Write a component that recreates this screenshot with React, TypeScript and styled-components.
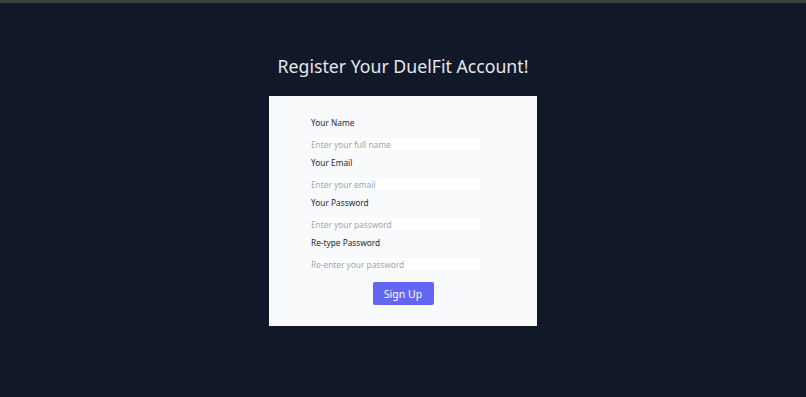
import { useState } from "react";
import styled, { createGlobalStyle } from "styled-components";

const GlobalStyle = createGlobalStyle`
  html, body {
    margin: 0;
    padding: 0;
    background: #111827;
    font-family: "Noto Sans", "Open Sans", sans-serif;
  }
`;

const fields = [
  { id: "name", label: "Your Name", type: "text", placeholder: "Enter your full name" },
  { id: "email", label: "Your Email", type: "email", placeholder: "Enter your email" },
  { id: "password", label: "Your Password", type: "password", placeholder: "Enter your password" },
  { id: "retype", label: "Re-type Password", type: "password", placeholder: "Re-enter your password" },
];

const App = () => {
  const [values, setValues] = useState<Record<string, string>>({});

  return (
    <>
      <GlobalStyle />
      <TopBar />
      <Page>
        <Title>Register Your DuelFit Account!</Title>
        <Card onSubmit={(e) => e.preventDefault()}>
          {fields.map((f) => (
            <Group key={f.id}>
              <Label htmlFor={f.id}>{f.label}</Label>
              <Input
                id={f.id}
                type={f.type}
                placeholder={f.placeholder}
                value={values[f.id] || ""}
                onChange={(e) => setValues({ ...values, [f.id]: e.target.value })}
              />
            </Group>
          ))}
          <ButtonRow>
            <SubmitButton type="submit">Sign Up</SubmitButton>
          </ButtonRow>
        </Card>
      </Page>
    </>
  );
};

export default App;

const TopBar = styled.div`
  height: 3px;
  background: #3b3d42;
`;

const Page = styled.div`
  display: flex;
  flex-direction: column;
  align-items: center;
  min-height: 394px;
  padding-top: 51px;
  box-sizing: border-box;
`;

const Title = styled.h1`
  margin: 0 0 18px;
  font-size: 17.7px;
  line-height: 24px;
  font-weight: 400;
  color: #e5e7eb;
`;

const Card = styled.form`
  width: 268px;
  box-sizing: border-box;
  padding: 20px 41px 21px;
  background: #f9fafb;
  display: flex;
  flex-direction: column;
`;

const Group = styled.div`
  display: flex;
  flex-direction: column;
  margin-bottom: 6px;
`;

const Label = styled.label`
  font-size: 8.3px;
  line-height: 14px;
  color: #1f2937;
  margin-bottom: 8px;
  padding-left: 1px;
`;

const Input = styled.input`
  width: 170px;
  height: 12px;
  box-sizing: border-box;
  border: none;
  outline: none;
  background: #ffffff;
  padding: 0 1px;
  font-family: "Noto Sans", "Open Sans", sans-serif;
  font-size: 8.3px;
  color: #1f2937;

  &::placeholder {
    color: #9ca3af;
    font-size: 8.3px;
  }
`;

const ButtonRow = styled.div`
  display: flex;
  justify-content: center;
  margin-top: 6px;
`;

const SubmitButton = styled.button`
  width: 61px;
  height: 23px;
  border: none;
  border-radius: 2px;
  background: #6366f1;
  color: #ffffff;
  font-family: inherit;
  font-size: 10.5px;
  cursor: pointer;
`;
